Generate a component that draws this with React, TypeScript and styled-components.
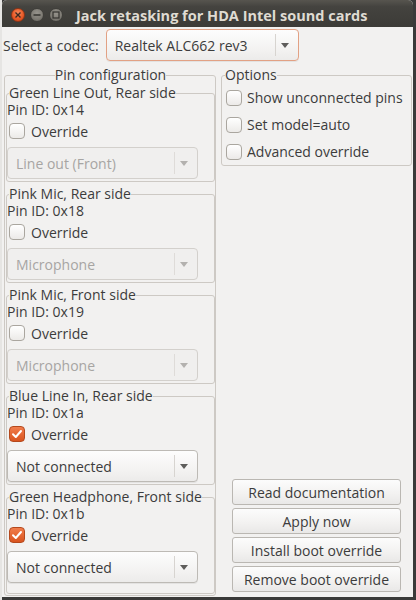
import { FC } from 'react'
import styled, { createGlobalStyle } from 'styled-components'

const GlobalStyle = createGlobalStyle`
  html, body {
    margin: 0;
    padding: 0;
    background: #3c3c3b;
  }
  body {
    font-family: 'Open Sans', 'DejaVu Sans', sans-serif;
    font-size: 14px;
    color: #3c3c3c;
  }
`

type Pin = {
  name: string
  id: string
  override: boolean
  value: string
}

const pins: Pin[] = [
  { name: 'Green Line Out, Rear side', id: '0x14', override: false, value: 'Line out (Front)' },
  { name: 'Pink Mic, Rear side', id: '0x18', override: false, value: 'Microphone' },
  { name: 'Pink Mic, Front side', id: '0x19', override: false, value: 'Microphone' },
  { name: 'Blue Line In, Rear side', id: '0x1a', override: true, value: 'Not connected' },
  { name: 'Green Headphone, Front side', id: '0x1b', override: true, value: 'Not connected' },
]

const options = ['Show unconnected pins', 'Set model=auto', 'Advanced override']
const actions = ['Read documentation', 'Apply now', 'Install boot override', 'Remove boot override']

const Check: FC<{ checked?: boolean }> = ({ checked }) => (
  <CheckBox $checked={checked}>
    {checked && (
      <svg width="12" height="12" viewBox="0 0 12 12">
        <polyline points="2,6.2 4.8,9 10,3" fill="none" stroke="#fff" strokeWidth="2" strokeLinecap="round" strokeLinejoin="round" />
      </svg>
    )}
  </CheckBox>
)

const ComboBox: FC<{ text: string; width: number; focused?: boolean; disabled?: boolean }> = ({ text, width, focused, disabled }) => (
  <Combo $width={width} $focused={focused} $disabled={disabled}>
    <ComboText>{text}</ComboText>
    <ComboSep $disabled={disabled} />
    <ComboArrow $disabled={disabled} />
  </Combo>
)

const PinFrame: FC<{ pin: Pin; grow?: boolean }> = ({ pin, grow }) => (
  <Frame $grow={grow}>
    <Legend>{pin.name}</Legend>
    <PinId>Pin ID: {pin.id}</PinId>
    <CheckRow $indent={2} $gap={6} $height={24}>
      <Check checked={pin.override} />
      <span>Override</span>
    </CheckRow>
    <ComboWrap>
      <ComboBox text={pin.value} width={191} disabled={!pin.override} />
    </ComboWrap>
  </Frame>
)

export default function App() {
  return (
    <Desktop>
      <GlobalStyle />
      <LeftGutter />
      <Window>
        <TitleBar>
          <WindowButtons>
            <CircleButton $kind="close">
              <svg width="8" height="8" viewBox="0 0 8 8">
                <path d="M1.5 1.5 L6.5 6.5 M6.5 1.5 L1.5 6.5" stroke="#3a2a22" strokeWidth="1.4" />
              </svg>
            </CircleButton>
            <CircleButton $kind="min">
              <svg width="8" height="8" viewBox="0 0 8 8">
                <path d="M0.5 4 H7.5" stroke="#34332f" strokeWidth="1.4" />
              </svg>
            </CircleButton>
            <CircleButton $kind="max">
              <svg width="8" height="8" viewBox="0 0 8 8">
                <rect x="1" y="1" width="6" height="6" fill="none" stroke="#34332f" strokeWidth="1.2" />
              </svg>
            </CircleButton>
          </WindowButtons>
          <Title>Jack retasking for HDA Intel sound cards</Title>
        </TitleBar>
        <Body>
          <CodecRow>
            <span>Select a codec:</span>
            <ComboBox text="Realtek ALC662 rev3" width={193} focused />
          </CodecRow>
          <Columns>
            <PinConfig>
              <Legend $center>Pin configuration</Legend>
              {pins.map((pin, i) => (
                <PinFrame key={pin.id} pin={pin} grow={i === pins.length - 1} />
              ))}
            </PinConfig>
            <SideColumn>
              <OptionsFrame>
                <Legend $indent={3}>Options</Legend>
                {options.map(label => (
                  <CheckRow key={label} $indent={4} $gap={5} $height={27}>
                    <Check />
                    <span>{label}</span>
                  </CheckRow>
                ))}
              </OptionsFrame>
              <ButtonStack>
                {actions.map(label => (
                  <PushButton key={label}>{label}</PushButton>
                ))}
              </ButtonStack>
            </SideColumn>
          </Columns>
        </Body>
      </Window>
    </Desktop>
  )
}

const Desktop = styled.div`
  display: flex;
  width: 416px;
  height: 600px;
  overflow: hidden;
  background: #3a3a39;
`
const LeftGutter = styled.div`
  width: 2px;
  background: #e6e5e3;
`
const Window = styled.div`
  display: flex;
  flex-direction: column;
  width: 411px;
  height: 597px;
  border-radius: 5px 5px 0 0;
  overflow: hidden;
  background: #f2f1f0;
`
const TitleBar = styled.div`
  display: flex;
  align-items: center;
  box-sizing: border-box;
  height: 27px;
  padding: 3px 0 0 9px;
  background: linear-gradient(180deg, #57554f 0%, #44433f 25%, #3c3b37 100%);
`
const WindowButtons = styled.div`
  display: flex;
  gap: 5px;
`
const CircleButton = styled.div<{ $kind: 'close' | 'min' | 'max' }>`
  box-sizing: border-box;
  display: flex;
  align-items: center;
  justify-content: center;
  width: 14px;
  height: 14px;
  border-radius: 50%;
  border: 1px solid ${p => (p.$kind === 'close' ? '#8f3416' : '#3f3e3a')};
  background: ${p =>
    p.$kind === 'close'
      ? 'radial-gradient(circle at 50% 35%, #f58a5e 0%, #e85a27 55%, #c9441a 100%)'
      : 'radial-gradient(circle at 50% 35%, #96938c 0%, #7f7c75 55%, #65635d 100%)'};
`
const Title = styled.div`
  margin-left: 13px;
  font-family: 'Open Sans', 'DejaVu Sans', sans-serif;
  font-weight: 700;
  font-size: 14.5px;
  color: #dfdbd2;
  white-space: nowrap;
`
const Body = styled.div`
  display: flex;
  flex-direction: column;
  flex: 1;
  min-height: 0;
  padding-bottom: 1px;
`
const CodecRow = styled.div`
  display: flex;
  align-items: center;
  gap: 7px;
  margin-top: 2px;
  padding-left: 1px;
  white-space: nowrap;
`
const Combo = styled.div<{ $width: number; $focused?: boolean; $disabled?: boolean }>`
  box-sizing: border-box;
  display: flex;
  align-items: center;
  width: ${p => p.$width}px;
  height: 32px;
  border-radius: 4px;
  border: 1px solid ${p => (p.$focused ? '#e2a184' : p.$disabled ? '#d3d0cc' : '#bdbab5')};
  background: ${p => (p.$disabled ? '#f0efee' : 'linear-gradient(180deg, #fdfdfd 0%, #f4f3f2 60%, #ecebea 100%)')};
  box-shadow: ${p => (p.$disabled ? 'none' : '0 1px 0 rgba(0, 0, 0, 0.06)')};
  color: ${p => (p.$disabled ? '#a7a5a3' : '#3c3c3c')};
`
const ComboText = styled.span`
  flex: 1;
  padding-left: 8px;
  white-space: nowrap;
  overflow: hidden;
`
const ComboSep = styled.span<{ $disabled?: boolean }>`
  width: 1px;
  height: 22px;
  background: ${p => (p.$disabled ? '#dedbd8' : '#d7d4d0')};
`
const ComboArrow = styled.span<{ $disabled?: boolean }>`
  width: 0;
  height: 0;
  margin: 1px 9px 0 5px;
  border-left: 4px solid transparent;
  border-right: 4px solid transparent;
  border-top: 5px solid ${p => (p.$disabled ? '#b3b1ae' : '#5e5d5b')};
`
const Columns = styled.div`
  display: flex;
  flex: 1;
  min-height: 0;
  gap: 5px;
  margin-top: 6px;
  padding: 0 1px 0 2px;
`
const Frame = styled.fieldset<{ $grow?: boolean }>`
  display: flex;
  flex-direction: column;
  min-width: 0;
  margin: 0;
  padding: 0 0 2px 0;
  border: 1px solid #cdc9c4;
  border-radius: 3px;
  ${p => (p.$grow ? 'flex: 1;' : '')}
`
const PinConfig = styled(Frame)`
  width: 212px;
  box-sizing: border-box;
  gap: 4px;
  padding: 2px 0 1px 1px;
`
const Legend = styled.legend<{ $center?: boolean; $indent?: number }>`
  padding: 0;
  line-height: 16px;
  white-space: nowrap;
  margin-left: ${p => (p.$center ? 'auto' : `${p.$indent ?? 2}px`)};
  margin-right: ${p => (p.$center ? 'auto' : '0')};
`
const PinId = styled.div`
  line-height: 18px;
`
const CheckRow = styled.div<{ $indent: number; $gap: number; $height: number }>`
  display: flex;
  align-items: center;
  gap: ${p => p.$gap}px;
  height: ${p => p.$height}px;
  padding-left: ${p => p.$indent}px;
  white-space: nowrap;
`
const CheckBox = styled.span<{ $checked?: boolean }>`
  box-sizing: border-box;
  display: flex;
  align-items: center;
  justify-content: center;
  flex-shrink: 0;
  width: 16px;
  height: 16px;
  border-radius: 4px;
  border: 1px solid ${p => (p.$checked ? '#b4491d' : '#aaa69f')};
  background: ${p =>
    p.$checked ? 'linear-gradient(180deg, #f17d4c 0%, #d9541f 100%)' : 'linear-gradient(180deg, #ffffff 0%, #eceae8 100%)'};
`
const ComboWrap = styled.div`
  margin-top: 4px;
`
const SideColumn = styled.div`
  display: flex;
  flex-direction: column;
  flex: 1;
  min-width: 0;
`
const OptionsFrame = styled(Frame)`
  padding: 1px 0 0 0;
`
const ButtonStack = styled.div`
  display: flex;
  flex-direction: column;
  align-items: center;
  gap: 3px;
  margin-top: auto;
  margin-bottom: 4px;
`
const PushButton = styled.div`
  box-sizing: border-box;
  display: flex;
  align-items: center;
  justify-content: center;
  width: 169px;
  height: 26px;
  border-radius: 3px;
  border: 1px solid #bab7b2;
  background: linear-gradient(180deg, #fcfcfc 0%, #f3f2f1 55%, #e9e8e7 100%);
  white-space: nowrap;
`
